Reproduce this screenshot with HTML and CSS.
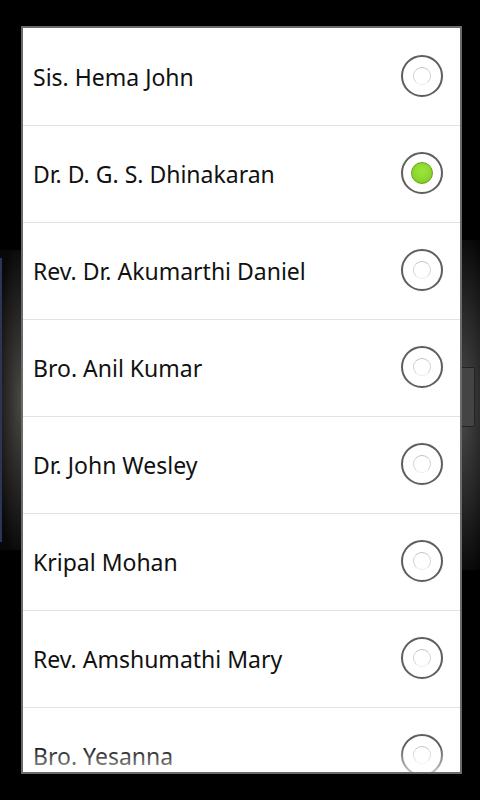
FILE: index.html
```html
<!DOCTYPE html>
<html>
<head>
<meta charset="utf-8">
<link rel="stylesheet" href="styles.css">
</head>
<body>
<div class="bg-left"><div class="bg-left-edge"></div></div>
<div class="bg-right"><div class="bg-handle"></div></div>
<div class="dialog">
  <ul class="list">
    <li class="row"><span class="name">Sis. Hema John</span><span class="radio"></span></li>
    <li class="row"><span class="name">Dr. D. G. S. Dhinakaran</span><span class="radio checked"></span></li>
    <li class="row"><span class="name">Rev. Dr. Akumarthi Daniel</span><span class="radio"></span></li>
    <li class="row"><span class="name">Bro. Anil Kumar</span><span class="radio"></span></li>
    <li class="row"><span class="name">Dr. John Wesley</span><span class="radio"></span></li>
    <li class="row"><span class="name">Kripal Mohan</span><span class="radio"></span></li>
    <li class="row"><span class="name">Rev. Amshumathi Mary</span><span class="radio"></span></li>
    <li class="row"><span class="name">Bro. Yesanna</span><span class="radio"></span></li>
  </ul>
  <div class="fade"></div>
</div>
</body>
</html>
```
FILE: styles.css
```css
html, body {
  margin: 0;
  padding: 0;
  background: #000;
  width: 480px;
  height: 800px;
  overflow: hidden;
}
body {
  position: relative;
  padding: 26px 18px 26px 21px;
  box-sizing: border-box;
  font-family: "Noto Sans", "Open Sans", sans-serif;
}
.bg-left {
  position: absolute;
  left: 0;
  top: 250px;
  width: 21px;
  height: 300px;
  background: radial-gradient(ellipse 30px 160px at 21px 50%, #4a4845 0%, #262523 55%, #080808 100%);
}
.bg-left-edge {
  position: absolute;
  left: 0;
  top: 8px;
  bottom: 8px;
  width: 2px;
  background: #2b3656;
}
.bg-right {
  position: absolute;
  right: 0;
  top: 240px;
  width: 18px;
  height: 330px;
  background: radial-gradient(ellipse 40px 180px at 0 50%, #4a4a4a 0%, #262626 55%, #050505 100%);
}
.bg-handle {
  position: absolute;
  left: 0;
  top: 127px;
  width: 12px;
  height: 58px;
  border: 1px solid #222;
  border-left: none;
  border-radius: 0 2px 2px 0;
  background: #444;
}
.dialog {
  position: relative;
  width: 441px;
  height: 748px;
  box-sizing: border-box;
  border: 2px solid #6a6a6a;
  background: #fff;
  overflow: hidden;
}
.list {
  list-style: none;
  margin: 0;
  padding: 1px 0 0;
}
.row {
  height: 96px;
  border-bottom: 1px solid #e2e2e2;
  display: flex;
  align-items: center;
  justify-content: space-between;
  padding: 0 17px 0 10px;
}
.name {
  font-size: 23px;
  color: #111;
}
.radio {
  width: 38px;
  height: 38px;
  margin-bottom: 3px;
  border: 2px solid #5e5e5e;
  border-radius: 50%;
  display: flex;
  align-items: center;
  justify-content: center;
  box-shadow: 0 0 2px rgba(0,0,0,0.08);
}
.radio::after {
  content: "";
  width: 16px;
  height: 16px;
  border-radius: 50%;
  border: 1.5px solid #d4d4d4;
  border-top-color: #c0c0c0;
  border-bottom-color: #ececec;
}
.radio.checked::after {
  width: 20px;
  height: 20px;
  border: 1px solid #6aa021;
  background: radial-gradient(circle at 50% 40%, #9be63a 0%, #8ad62c 60%, #78c01f 100%);
}
.fade {
  position: absolute;
  left: 0;
  right: 0;
  bottom: 0;
  height: 26px;
  background: linear-gradient(rgba(255,255,255,0), rgba(255,255,255,0.6));
}
```
